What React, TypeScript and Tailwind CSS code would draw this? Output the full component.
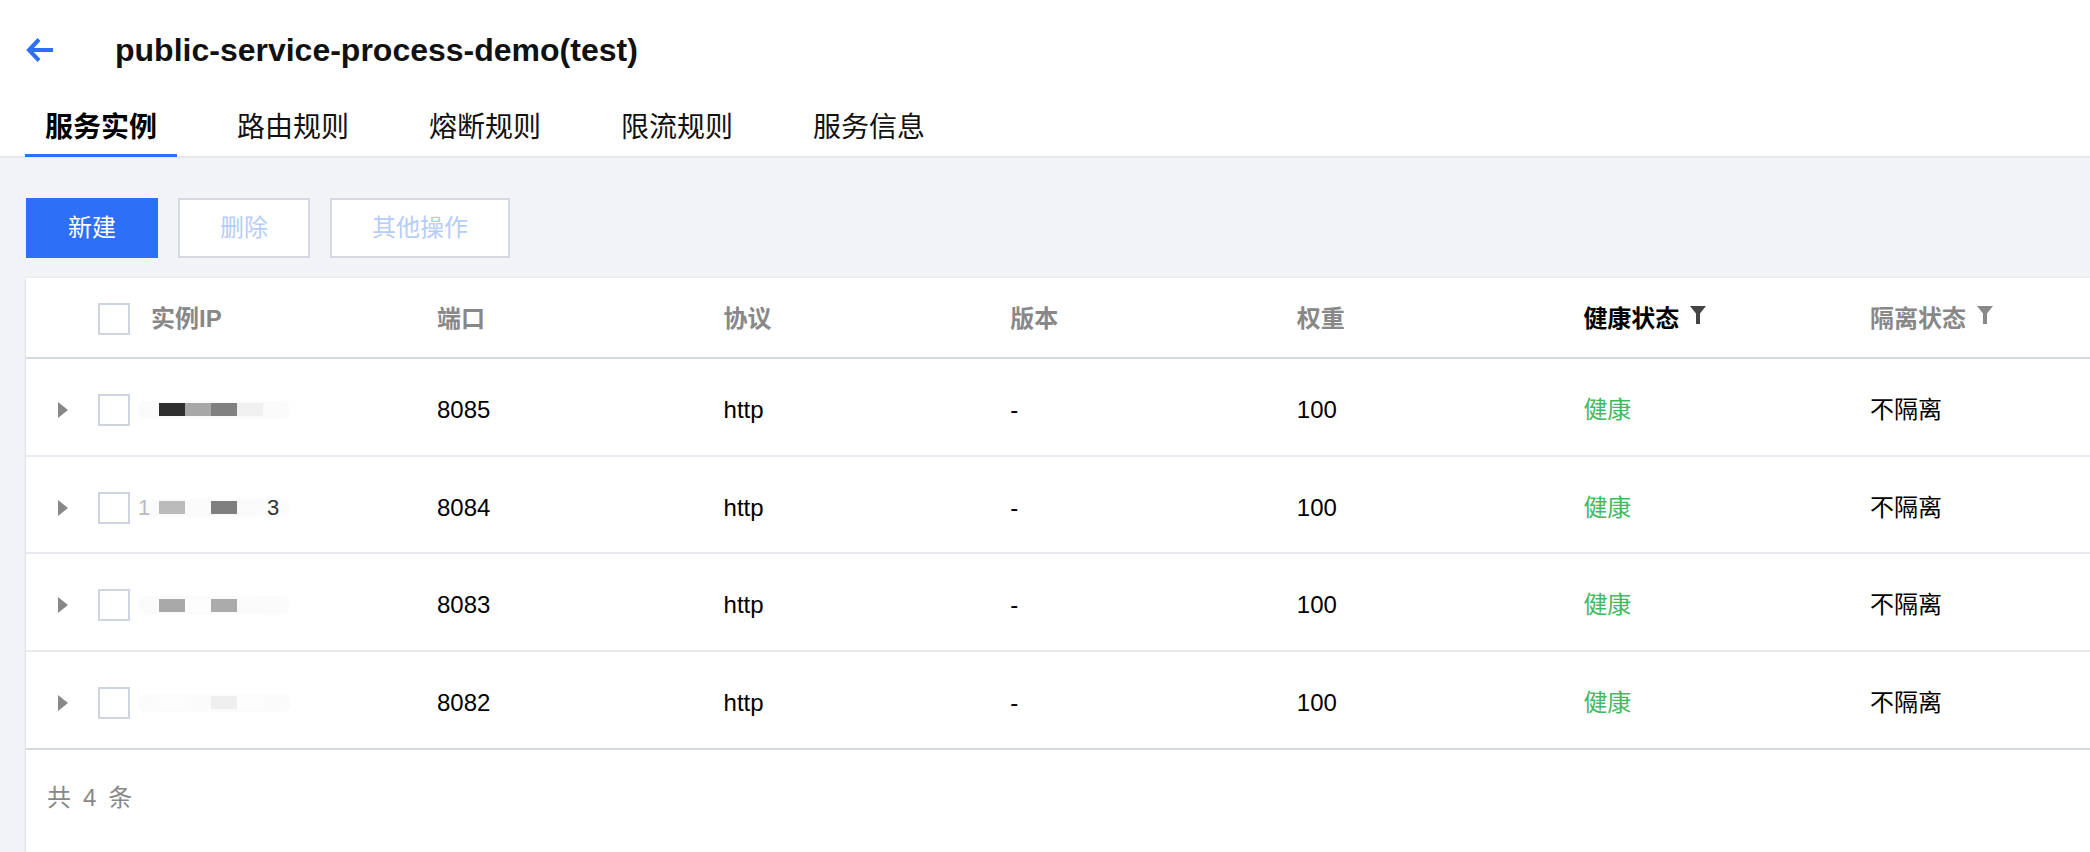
import { useState } from 'react';

const tabs = ['服务实例', '路由规则', '熔断规则', '限流规则', '服务信息'];

// redacted IP cells: grey mosaic blocks (26px each)
const rows = [
  { port: '8085', blocks: ['#2e2e2e', '#a7a7a7', '#808080', '#f0f0f0'], lead: '', tail: '' },
  { port: '8084', blocks: ['#bbbbbb', '#fbfbfb', '#7f7f7f', '#fafafa'], lead: '1', tail: '3' },
  { port: '8083', blocks: ['#a9a9a9', '#fdfdfd', '#ababab', '#fafafa'], lead: '', tail: '' },
  { port: '8082', blocks: ['#fdfdfd', '#fbfbfb', '#efefef', '#fdfdfd'], lead: '', tail: '' },
];

function BackArrow() {
  return (
    <svg width="28" height="28" viewBox="0 0 28 28" fill="none">
      <path d="M13 3.5 L3 14 L13 24.5 M3 14 H27" stroke="#2d6ff7" strokeWidth="4" strokeLinejoin="miter" />
    </svg>
  );
}

function Funnel({ color }: { color: string }) {
  return (
    <svg width="16" height="18" viewBox="0 0 16 18" className="-mt-[8px]">
      <path d="M0 0h16L10 7.5v10.5h-4V7.5z" fill={color} />
    </svg>
  );
}

function Checkbox() {
  return <div className="w-[32px] h-[32px] border-2 border-[#cfd5e0] bg-white shrink-0" />;
}

export default function App() {
  const [active] = useState(0);

  return (
    <div
      className="min-h-screen bg-[#f2f3f7] text-black"
      style={{ fontFamily: '"Liberation Sans", "Noto Sans CJK SC", sans-serif' }}
    >
      {/* header */}
      <div className="bg-white border-b-2 border-[#e5e8ef]">
        <div className="h-[100px] flex items-center pl-[26px]">
          <BackArrow />
          <h1 className="ml-[61px] text-[32px] font-bold leading-none text-[#111]">
            public-service-process-demo(test)
          </h1>
        </div>
        <div className="h-[56px] flex items-center pl-[25px] gap-[40px]">
          {tabs.map((t, i) => (
            <div key={t} className="relative h-full flex items-center px-[20px]">
              <span className={`text-[28px] leading-none ${i === active ? 'font-bold text-black' : 'text-[#111]'}`}>{t}</span>
              {i === active && <div className="absolute left-0 right-0 bottom-[-1px] h-[3px] bg-[#2d6ff7]" />}
            </div>
          ))}
        </div>
      </div>

      <div className="pl-[26px] pt-[40px]">
        {/* toolbar */}
        <div className="flex gap-[20px]">
          <button className="h-[60px] px-[40px] border-2 border-[#2d6ff7] bg-[#2d6ff7] text-white text-[24px]">新建</button>
          <button className="h-[60px] px-[40px] border-2 border-[#d4d9e2] bg-white text-[#b5cdf8] text-[24px]">删除</button>
          <button className="h-[60px] px-[40px] border-2 border-[#d4d9e2] bg-white text-[#b5cdf8] text-[24px]">其他操作</button>
        </div>

        {/* table card */}
        <div className="mt-[20px] bg-white shadow-[0_1px_3px_rgba(54,58,80,0.18)] text-[24px]">
          <div className="h-[81px] flex items-center border-b-2 border-[#d5d9e2] font-bold text-[#888] pt-[2px]">
            <div className="w-[411px] flex items-center pl-[72px]">
              <Checkbox />
              <span className="ml-[21px]">实例IP</span>
            </div>
            <div className="w-[286.6px]">端口</div>
            <div className="w-[286.6px]">协议</div>
            <div className="w-[286.6px]">版本</div>
            <div className="w-[286.6px]">权重</div>
            <div className="w-[286.6px] flex items-center text-black">
              健康状态<span className="ml-[11px]"><Funnel color="#444" /></span>
            </div>
            <div className="flex-1 flex items-center">
              隔离状态<span className="ml-[11px]"><Funnel color="#888" /></span>
            </div>
          </div>

          {rows.map((r, idx) => (
            <div
              key={r.port}
              className={`h-[97.7px] flex items-center pt-[6px] border-b-2 ${idx === rows.length - 1 ? 'border-[#d5d9e2]' : 'border-[#e7eaf0]'}`}
            >
              <div className="w-[411px] flex items-center pl-[32px]">
                <svg width="10" height="16" viewBox="0 0 10 16"><path d="M0 0L10 8L0 16z" fill="#888" /></svg>
                <div className="ml-[30px]"><Checkbox /></div>
                <div className="ml-[8px] w-[152px] h-[18px] flex items-center bg-[#fbfbfb] rounded-[8px]">
                  <span className="w-[12px] text-[#bbb] text-[22px] leading-none text-right">{r.lead}</span>
                  <div className="ml-[9px] flex">
                    {r.blocks.map((c, j) => (
                      <div key={j} className="w-[26px] h-[13px]" style={{ backgroundColor: c }} />
                    ))}
                  </div>
                  <span className="ml-[4px] text-[#333] text-[22px] leading-none">{r.tail}</span>
                </div>
              </div>
              <div className="w-[286.6px]">{r.port}</div>
              <div className="w-[286.6px]">http</div>
              <div className="w-[286.6px]">-</div>
              <div className="w-[286.6px]">100</div>
              <div className="w-[286.6px] text-[#46b95f]">健康</div>
              <div className="flex-1">不隔离</div>
            </div>
          ))}

          <div className="h-[104px] flex items-start pt-[30px] pl-[21px] text-[#888] gap-[12px]">
            <span>共</span>
            <span>4</span>
            <span>条</span>
          </div>
        </div>
      </div>
    </div>
  );
}
